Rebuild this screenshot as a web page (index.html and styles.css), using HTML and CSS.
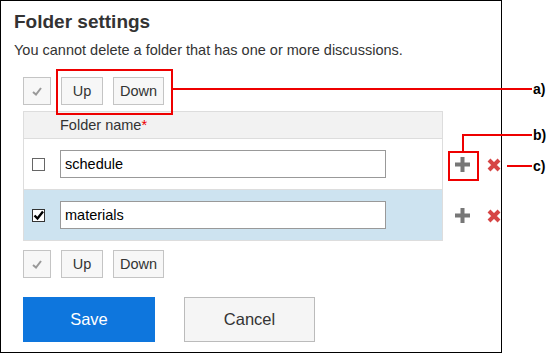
FILE: index.html
```html
<!DOCTYPE html>
<html>
<head>
    <title>Folder settings</title>
    <link rel="stylesheet" href="styles.css">
</head>
<body>
    <div class="frame">
        <h1 class="title">Folder settings</h1>
        <p class="desc">You cannot delete a folder that has one or more discussions.</p>

        <div class="toolbar toolbar-top">
            <button class="btn btn-check" type="button">
                <svg width="10" height="9" viewBox="0 0 10 9"><path d="M1 5 L4 7.5 L9 1" fill="none" stroke="#999" stroke-width="2"/></svg>
            </button>
            <button class="btn btn-up" type="button">Up</button>
            <button class="btn btn-down" type="button">Down</button>
        </div>

        <div class="list">
            <div class="row row-head">
                <div class="row-main">Folder name<span class="required">*</span></div>
            </div>
            <div class="row">
                <div class="row-main">
                    <span class="checkbox"></span>
                    <input class="name-input" type="text" value="schedule">
                </div>
                <div class="actions">
                    <svg class="icon-add" width="15" height="15" viewBox="0 0 15 15"><rect x="5.5" y="0" width="4" height="15" fill="#777"/><rect x="0" y="5.5" width="15" height="4" fill="#777"/></svg>
                    <svg class="icon-delete" width="14" height="14" viewBox="0 0 14 14"><path d="M2 2 L12 12 M12 2 L2 12" stroke="#d64545" stroke-width="4"/></svg>
                </div>
            </div>
            <div class="row row-selected">
                <div class="row-main">
                    <span class="checkbox checked">
                        <svg width="11" height="11" viewBox="0 0 11 11"><path d="M1.5 5.5 L4.5 8.5 L10 1.5" fill="none" stroke="#000" stroke-width="2.4"/></svg>
                    </span>
                    <input class="name-input" type="text" value="materials">
                </div>
                <div class="actions">
                    <svg class="icon-add" width="15" height="15" viewBox="0 0 15 15"><rect x="5.5" y="0" width="4" height="15" fill="#777"/><rect x="0" y="5.5" width="15" height="4" fill="#777"/></svg>
                    <svg class="icon-delete" width="14" height="14" viewBox="0 0 14 14"><path d="M2 2 L12 12 M12 2 L2 12" stroke="#d64545" stroke-width="4"/></svg>
                </div>
            </div>
        </div>

        <div class="toolbar toolbar-bottom">
            <button class="btn btn-check" type="button">
                <svg width="10" height="9" viewBox="0 0 10 9"><path d="M1 5 L4 7.5 L9 1" fill="none" stroke="#999" stroke-width="2"/></svg>
            </button>
            <button class="btn btn-up" type="button">Up</button>
            <button class="btn btn-down" type="button">Down</button>
        </div>

        <div class="form-buttons">
            <button class="btn-save" type="button">Save</button>
            <button class="btn-cancel" type="button">Cancel</button>
        </div>

        <!-- callouts -->
        <div class="mark box-a"></div>
        <div class="mark line-a"></div>
        <span class="mark-label label-a">a)</span>

        <div class="mark box-b"></div>
        <div class="mark line-b1"></div>
        <div class="mark line-b2"></div>
        <span class="mark-label label-b">b)</span>

        <div class="mark line-c"></div>
        <span class="mark-label label-c">c)</span>
    </div>
</body>
</html>
```

FILE: styles.css
```css
body {
    margin: 0;
    background-color: #fff;
    font-family: "Liberation Sans", Arial, sans-serif;
    color: #333;
}

.frame {
    position: relative;
    width: 502px;
    height: 353px;
    box-sizing: border-box;
    border: 1px solid #000;
    padding: 10px 0 0 13px;
}

.title {
    margin: 0;
    font-size: 19px;
    line-height: 22px;
    font-weight: bold;
    color: #333;
}

.desc {
    margin: 8px 0 0;
    font-size: 14.5px;
    line-height: 18px;
}

.toolbar {
    display: flex;
    gap: 10px;
    margin-left: 9px;
}

.toolbar-top {
    margin-top: 18px;
}

.toolbar-bottom {
    margin-top: 9px;
}

.btn {
    height: 28px;
    padding: 0;
    background-color: #f7f7f7;
    border: 1px solid #c4c4c4;
    font-family: inherit;
    font-size: 14.5px;
    color: #333;
    display: flex;
    align-items: center;
    justify-content: center;
}

.btn-check { width: 28px; }
.btn-up { width: 42px; }
.btn-down { width: 51px; }

.list {
    margin: 6px 0 0 9px;
}

.row {
    display: flex;
    align-items: center;
}

.row-main {
    width: 420px;
    box-sizing: border-box;
    border: 1px solid #ddd;
    border-top: none;
    display: flex;
    align-items: center;
    height: 51px;
}

.row-head .row-main {
    border-top: 1px solid #ddd;
    height: 28px;
    background-color: #f2f2f2;
    padding-left: 36px;
    font-size: 14.5px;
}

.required {
    color: #e00;
}

.row-selected .row-main {
    background-color: #cde3f0;
}

.checkbox {
    width: 13px;
    height: 13px;
    box-sizing: border-box;
    border: 1px solid #666;
    background-color: #fff;
    margin-left: 8px;
    display: flex;
    align-items: center;
    justify-content: center;
}

.checkbox.checked {
    border-color: #333;
}

.name-input {
    margin-left: 15px;
    width: 326px;
    height: 28px;
    box-sizing: border-box;
    border: 1px solid #999;
    padding: 0 4px;
    font-family: inherit;
    font-size: 14.5px;
    color: #000;
    outline: none;
}

.actions {
    display: flex;
    align-items: center;
    gap: 17px;
    margin-left: 12px;
}

.form-buttons {
    display: flex;
    gap: 29px;
    margin: 19px 0 0 9px;
}

.btn-save {
    width: 132px;
    height: 45px;
    border: none;
    background-color: #0e76dd;
    color: #fff;
    font-family: inherit;
    font-size: 16.5px;
}

.btn-cancel {
    width: 131px;
    height: 45px;
    border: 1px solid #bbb;
    background-color: #f5f5f5;
    color: #333;
    font-family: inherit;
    font-size: 16.5px;
}

/* callouts drawn over the screenshot */
.mark {
    position: absolute;
    box-sizing: border-box;
}

.box-a {
    left: 55px;
    top: 68px;
    width: 117px;
    height: 46px;
    border: 2px solid #e00;
}

.line-a {
    left: 171px;
    top: 87px;
    width: 360px;
    height: 2px;
    background-color: #e00;
}

.box-b {
    left: 447px;
    top: 150px;
    width: 31px;
    height: 30px;
    border: 2px solid #e00;
}

.line-b1 {
    left: 461px;
    top: 134px;
    width: 2px;
    height: 17px;
    background-color: #e00;
}

.line-b2 {
    left: 461px;
    top: 133px;
    width: 70px;
    height: 2px;
    background-color: #e00;
}

.line-c {
    left: 506px;
    top: 164px;
    width: 25px;
    height: 2px;
    background-color: #e00;
}

.mark-label {
    position: absolute;
    font-size: 14px;
    line-height: 16px;
    font-weight: bold;
    color: #000;
}

.label-a { left: 532px; top: 80px; }
.label-b { left: 532px; top: 126px; }
.label-c { left: 532px; top: 157px; }
```
